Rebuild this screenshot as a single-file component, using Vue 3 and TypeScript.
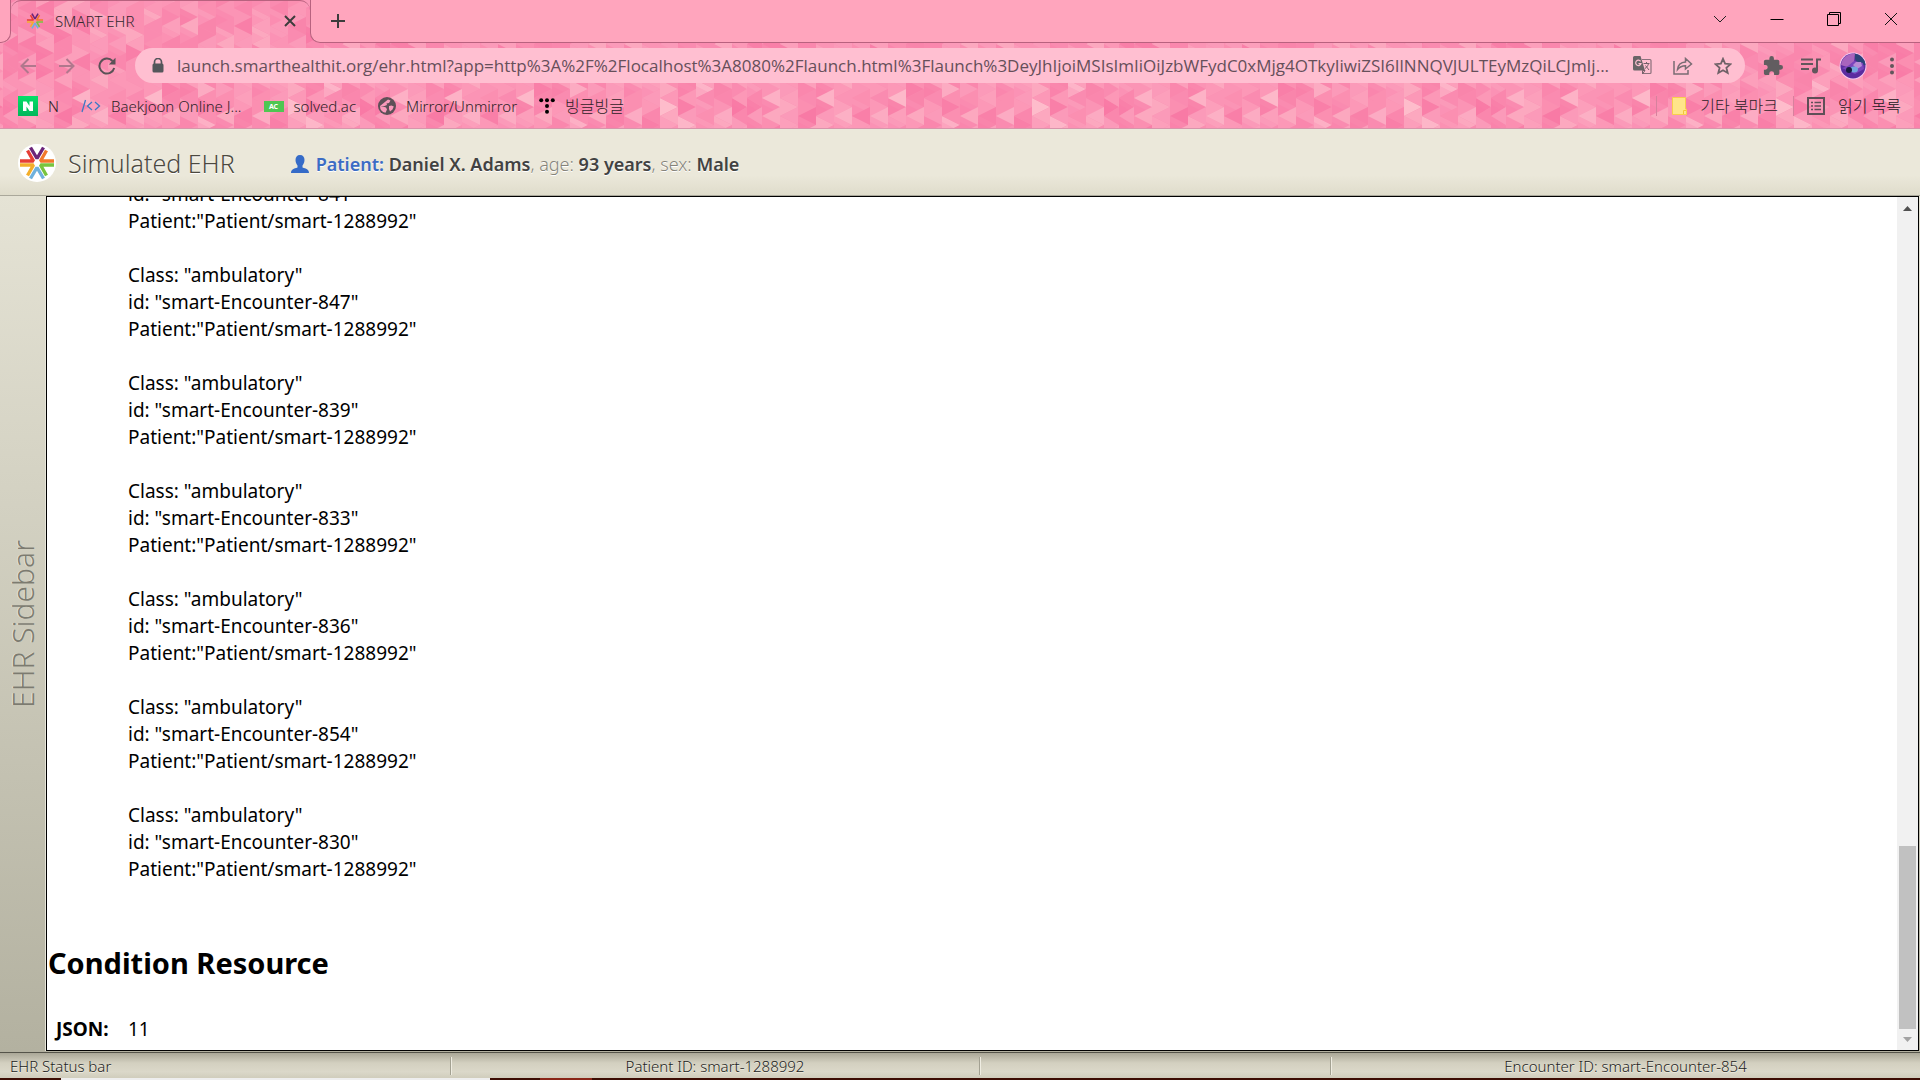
<script setup lang="ts">
interface Shard { points: string; fill: string; opacity: number }

const columns = [18, 18, 18, 18, 15, 15, 18, 18, 18, 18, 18, 18, 18, 18, 18, 18, 18, 18, 18, 18, 18]
const accents: Record<string, string> = {
  '0-r-5': '#febccb', '1-r-6': '#fdb6c8', '2-r-4': '#fdb4c8', '3-l-6': '#fcaac2',
  '6-l-5': '#fdb0c5', '9-l-5': '#fdb2c6', '10-l-6': '#fcb0c5', '13-l-5': '#fdb8c9',
  '12-l-6': '#fcabc2', '16-r-4': '#fcabc2', '16-r-6': '#fdb0c5', '4-r-5': '#f97ba6',
  '5-r-5': '#f980a9', '8-l-6': '#f87aa5', '18-l-6': '#f981a9', '19-l-6': '#fcabc3',
}
const tones = ['#fb8fb1', '#fa87ad', '#fc98b7', '#f985ab', '#fc9fbb', '#fb94b5', '#fa8bb0', '#fca8bf', '#f97fa8', '#fb9ab9']

function makeShards(): Shard[] {
  let seed = 41
  const next = () => {
    seed = (seed * 1103515245 + 12345) % 2147483648
    return seed / 2147483648
  }
  const shards: Shard[] = []
  let x = 0
  columns.forEach((w, c) => {
    for (let r = -1; r < 8; r++) {
      const top = 8 + r * 18
      const right = accents[`${c}-r-${r}`] ?? tones[Math.floor(next() * tones.length)]
      const left = accents[`${c}-l-${r}`] ?? tones[Math.floor(next() * tones.length)]
      shards.push({ points: `${x},${top} ${x + w},${top + 9} ${x},${top + 18}`, fill: right, opacity: 1 })
      shards.push({ points: `${x + w},${top - 9} ${x + w},${top + 9} ${x},${top}`, fill: left, opacity: 1 })
      if (next() > 0.5) {
        shards.push({ points: `${x},${top + 6} ${x + w},${top + 15} ${x},${top + 24}`, fill: '#f9719f', opacity: 0.18 })
      }
    }
    x += w
  })
  return shards
}
const shards = makeShards()

const url = 'launch.smarthealthit.org/ehr.html?app=http%3A%2F%2Flocalhost%3A8080%2Flaunch.html%3Flaunch%3DeyJhIjoiMSIsImIiOiJzbWFydC0xMjg4OTkyIiwiZSI6IlNNQVJULTEyMzQiLCJmIj...'

const patientId = 'smart-1288992'
const encounters = [841, 847, 839, 833, 836, 854, 830]
</script>

<template>
  <div class="window">
    <header class="chrome">
      <svg class="theme" aria-hidden="true">
        <defs>
          <pattern id="shards" x="-84" y="0" width="372" height="144" patternUnits="userSpaceOnUse">
            <rect width="372" height="144" fill="#fb8fb1" />
            <polygon v-for="(s, i) in shards" :key="i" :points="s.points" :fill="s.fill" :fill-opacity="s.opacity" />
          </pattern>
        </defs>
        <rect width="100%" height="100%" fill="url(#shards)" />
      </svg>

      <div class="tabstrip">
        <div class="strip-start"></div>
        <div class="tab">
          <svg class="favicon" viewBox="0 0 38 38"><use href="#smart-star" /></svg>
          <span class="tab-title">SMART EHR</span>
          <button class="plain" aria-label="Close tab">
            <svg width="12" height="12" viewBox="0 0 12 12" stroke="#3c3c3c" stroke-width="2"><path d="M1 1 11 11M11 1 1 11" /></svg>
          </button>
        </div>
        <div class="strip-rest">
          <button class="plain" aria-label="New tab">
            <svg width="16" height="16" viewBox="0 0 16 16" stroke="#3c3c3c" stroke-width="2"><path d="M8 1V15M1 8H15" /></svg>
          </button>
          <div class="controls">
            <button class="plain" aria-label="Search tabs"><svg width="14" height="14" viewBox="0 0 14 14" fill="none" stroke="#222"><path d="M1 4 7 10 13 4" /></svg></button>
            <button class="plain" aria-label="Minimize"><svg width="14" height="14" viewBox="0 0 14 14" fill="none" stroke="#000"><path d="M.5 7.500H13.500" /></svg></button>
            <button class="plain" aria-label="Restore"><svg width="14" height="14" viewBox="0 0 14 14" fill="none" stroke="#000"><path d="M.5 2.500H11.500V13.500H.5ZM2.500 2.500V.5H13.500V11.500H11.500" /></svg></button>
            <button class="plain" aria-label="Close"><svg width="14" height="14" viewBox="0 0 14 14" fill="none" stroke="#111"><path d="M1 1 13 13M13 1 1 13" /></svg></button>
          </div>
        </div>
      </div>

      <div class="toolbar">
        <div class="nav">
          <button class="plain" aria-label="Back"><svg width="16" height="16" viewBox="0 0 16 16" fill="none" stroke="#b1788d" stroke-width="2"><path d="M16 8H2M8.500 1 1.500 8 8.500 15" /></svg></button>
          <button class="plain" aria-label="Forward"><svg width="16" height="16" viewBox="0 0 16 16" fill="none" stroke="#b1788d" stroke-width="2"><path d="M0 8H14M7.500 1 14.500 8 7.500 15" /></svg></button>
          <button class="plain" aria-label="Reload"><svg width="18" height="18" viewBox="0 0 18 18" fill="none" stroke="#5b5257" stroke-width="2"><path d="M14.500 4A7.500 7.500 0 1 0 16.200 11" /><path d="M17.500 .8V7.500H10.800Z" fill="#5b5257" stroke="none" /></svg></button>
        </div>
        <div class="omnibox">
          <svg width="12" height="15" viewBox="0 0 12 15"><path d="M2.500 6V4a3.500 3.500 0 0 1 7 0v2" fill="none" stroke="#54565b" stroke-width="1.700" /><rect x=".5" y="5.500" width="11" height="9" rx="1.500" fill="#54565b" /></svg>
          <input class="url" type="text" aria-label="Address" :value="url" readonly />
          <div class="omni-actions">
            <button class="plain" aria-label="Translate">
              <svg width="19" height="19" viewBox="0 0 19 19"><path d="M9 3.500H17a1 1 0 0 1 1 1V16.500a1 1 0 0 1-1 1H9.500" fill="none" stroke="#8b707b" stroke-width="1.200" /><path d="M1.500 0H7.500L12 14.500H1.500A1.500 1.500 0 0 1 0 13V1.500A1.500 1.500 0 0 1 1.500 0Z" fill="#6a6467" /><path d="M7.600 5.300A2.700 2.700 0 1 0 8 7.600H5.500" fill="none" stroke="#ffbfd1" stroke-width="1.200" /><path d="M10.500 7.500H16.500M13.500 6V7.500M15.500 7.500C15 10 13.500 11.500 12 12.500M12.500 9.500 16 14M9.500 14.500 12 14.500 9.500 18Z" fill="none" stroke="#74616a" /></svg>
            </button>
            <button class="plain" aria-label="Share">
              <svg width="20" height="18" viewBox="0 0 20 18" fill="none" stroke="#7a6c73" stroke-width="1.500"><path d="M1 4V17H15V13" /><path d="M4.500 12.500C5 8 8 5.200 12.500 5V1.500L18.500 7 12.500 12V8.700C9 8.700 6.500 10 4.500 12.500Z" /></svg>
            </button>
            <button class="plain" aria-label="Bookmark">
              <svg width="18" height="18" viewBox="0 0 18 18" fill="none" stroke="#6f6167" stroke-width="1.800"><path d="M9 1.800 11.100 6.700 16.500 7.200 12.400 10.700 13.700 16 9 13.200 4.300 16 5.600 10.700 1.500 7.200 6.900 6.700Z" /></svg>
            </button>
          </div>
        </div>
        <div class="tools">
          <button class="plain" aria-label="Extensions">
            <svg width="20" height="20" viewBox="1 1 22 22" fill="#625d60"><path d="M20.500 11H19V7c0-1.100-.9-2-2-2h-4V3.500a2.500 2.500 0 0 0-5 0V5H4c-1.100 0-2 .9-2 2v3.800h1.500a2.700 2.700 0 0 1 0 5.400H2V20c0 1.100.9 2 2 2h3.800v-1.500a2.700 2.700 0 0 1 5.400 0V22H17c1.100 0 2-.9 2-2v-4h1.500a2.500 2.500 0 0 0 0-5z" /></svg>
          </button>
          <button class="plain" aria-label="Media">
            <svg width="20" height="16" viewBox="0 0 20 16"><path d="M0 1.500H12M0 6H12M0 11H8" stroke="#62565c" stroke-width="2" /><path d="M16 12V1.500H20" fill="none" stroke="#62565c" stroke-width="2" /><circle cx="14" cy="12.500" r="3" fill="#62565c" /></svg>
          </button>
          <button class="plain" aria-label="Profile">
            <svg width="28" height="28" viewBox="0 0 28 28"><circle cx="14" cy="14" r="13.500" fill="#f5c9f0" /><circle cx="14" cy="14" r="12.500" fill="#5b2ca0" /><path d="M15 1.500A12.500 12.500 0 0 1 26.500 13L20 13 16 7Z" fill="#2c4478" /><path d="M2 13C3 5 10 1 16 1.600L15 10 8 15Z" fill="#a864bd" /><path d="M3 16 9 14 15 9 24 11 25 17 16 22Z" fill="#7b45bd" /><path d="M14 13 17 10 22 10 23 14 18 17Z" fill="#b98ad6" /><ellipse cx="15" cy="17.500" rx="4" ry="3" fill="#73a6df" /><circle cx="10" cy="18" r="3" fill="#171b3f" /></svg>
          </button>
          <button class="plain" aria-label="Menu">
            <svg width="4" height="18" viewBox="0 0 4 18" fill="#62565c"><circle cx="2" cy="2.500" r="2" /><circle cx="2" cy="9" r="2" /><circle cx="2" cy="15.500" r="2" /></svg>
          </button>
        </div>
      </div>

      <nav class="bookmarks">
        <a href="#" class="bm">
          <svg width="20" height="20" viewBox="0 0 20 20"><defs><linearGradient id="green" x2="0" y2="1"><stop stop-color="#05df68" /><stop offset="1" stop-color="#02b65b" /></linearGradient></defs><rect width="20" height="20" fill="url(#green)" /><path d="M5 5.500H8.500L11.500 10V5.500H15V15H11.500L8.500 10.500V15H5Z" fill="#fff" /></svg>
          <span>N</span>
        </a>
        <a href="#" class="bm">
          <svg width="20" height="14" viewBox="0 0 20 14" fill="none" stroke="#3d78c4" stroke-width="1.300"><path d="M4.500 1 1 13" /><path d="M11 3 6.500 7 11 11M14 3 18.500 7 14 11" /></svg>
          <span>Baekjoon Online J...</span>
        </a>
        <a href="#" class="bm">
          <span class="ac">AC</span>
          <span>solved.ac</span>
        </a>
        <a href="#" class="bm">
          <svg width="18" height="18" viewBox="0 0 18 18"><circle cx="9" cy="9" r="9" fill="#5d5057" /><path d="M10 2.500 12.500 3.500 11 6 8.500 6.500 9 8 6.500 9H2.200L5 9.500 8 10.500 9 12.500 7.500 15.800A7 7 0 0 1 2 9ZM11 9 13.500 8.500 15.800 9.500 14.500 12.500 12 14.500 11 12Z" fill="#f99abb" /></svg>
          <span>Mirror/Unmirror</span>
        </a>
        <a href="#" class="bm">
          <svg width="16" height="16" viewBox="0 0 16 16"><circle cx="2.200" cy="2.200" r="2" /><circle cx="8" cy="2.200" r="2" /><circle cx="13.800" cy="2.200" r="2" /><circle cx="8" cy="8" r="2" /><circle cx="8" cy="13.800" r="2" /></svg>
          <span class="ko">빙글빙글</span>
        </a>
        <div class="bm-right">
          <a href="#" class="bm split">
            <svg width="15" height="18" viewBox="0 0 15 18"><path d="M.5 .5H13.500V12H14.500V17.500H.5Z" fill="#ffe58a" stroke="#f8cf4c" /><path d="M11.500 17V13.500H14" fill="none" stroke="#f5c53c" /></svg>
            <span class="ko">기타 북마크</span>
          </a>
          <a href="#" class="bm split reading">
            <svg width="18" height="18" viewBox="0 0 18 18"><rect x="1" y="1" width="16" height="16" fill="none" stroke="#5f4f57" stroke-width="2" /><path d="M4 5.500H6M7.500 5.500H14M4 9H6M7.500 9H14M4 12.500H6M7.500 12.500H14" stroke="#5f4f57" stroke-width="1.500" /></svg>
            <span class="ko">읽기 목록</span>
          </a>
        </div>
      </nav>
    </header>

    <div class="ehr-head">
      <svg class="logo" viewBox="0 0 38 38">
        <circle cx="19" cy="19" r="19" fill="#fff" />
        <g id="smart-star" fill="none" stroke-width="3.400" stroke-linejoin="bevel">
          <path d="M12.500 3.500 19 14.500 25.500 3.500" stroke="#6c2479" />
          <path d="M28.500 6.500 22.500 17H36" stroke="#f2792b" />
          <path d="M9.500 6.500 15.500 17H2" stroke="#e63e35" />
          <path d="M2 21H15.500L9.500 31.500" stroke="#f3ae2b" />
          <path d="M36 21H22.500L28.500 31.500" stroke="#78c43d" />
          <path d="M12.500 34.500 19 23.500 25.500 34.500" stroke="#6fb1dc" />
        </g>
      </svg>
      <h1>Simulated EHR</h1>
      <div class="patient">
        <svg width="18" height="18" viewBox="0 0 18 18" fill="#356bc8"><path d="M9 0C12 0 13.500 2 13.500 5 13.500 8 12 9.500 11.500 10.500V12.500C15 13.500 18 14.500 18 18H0C0 14.500 3 13.500 6.500 12.500V10.500C6 9.500 4.500 8 4.500 5 4.500 2 6 0 9 0Z" /></svg>
        <p><b class="blue">Patient:</b> <b>Daniel X. Adams</b>, age: <b>93 years</b>, sex: <b>Male</b></p>
      </div>
    </div>

    <div class="body">
      <aside class="sidebar"><span>EHR Sidebar</span></aside>
      <main class="frame">
        <div class="content">
          <div class="encounters">
            <p v-for="(n, i) in encounters" :key="n">
              <template v-if="i > 0">Class: "ambulatory"<br /></template>id: "smart-Encounter-{{ n }}"<br />Patient:"Patient/{{ patientId }}"
            </p>
          </div>
          <h2>Condition Resource</h2>
          <table><tbody><tr><th scope="row">JSON:</th><td>11</td></tr></tbody></table>
        </div>
        <div class="scrollbar">
          <svg width="21" height="20" viewBox="0 0 21 20"><path d="M6 14 10.500 9 15 14Z" fill="#505050" /></svg>
          <div class="track"><div class="thumb"></div></div>
          <svg width="21" height="20" viewBox="0 0 21 20"><path d="M6 7 10.500 12 15 7Z" fill="#a3a3a3" /></svg>
        </div>
      </main>
    </div>

    <footer class="status">
      <div class="cell first">EHR Status bar</div>
      <div class="cell">Patient ID: {{ patientId }}</div>
      <div class="cell"></div>
      <div class="cell last">Encounter ID: smart-Encounter-854</div>
    </footer>
    <div class="taskbar"><i class="dark a"></i><i class="light"></i><i class="dark b"></i><i class="red"></i><i class="dark c"></i></div>
  </div>
</template>

<style>
body { overflow: hidden; }
</style>

<style scoped>
* { box-sizing: border-box; }
.window {
  height: 100vh;
  display: flex;
  flex-direction: column;
  font-family: "Noto Sans", "Noto Sans CJK KR", sans-serif;
  color: #000;
}
.plain {
  border: 0;
  padding: 0;
  background: none;
  display: flex;
  align-items: center;
  justify-content: center;
}
svg { display: block; flex: none; }
.chrome { position: relative; flex: none; border-bottom: 1px solid #d795ab; }
.theme { position: absolute; inset: 0; width: 100%; height: 100%; z-index: -1; }
.tabstrip { display: flex; height: 43px; }
.strip-start {
  width: 11px;
  background: #ffa5bd;
  border: solid #b8627f;
  border-width: 0 1px 1px 0;
  border-bottom-right-radius: 10px;
}
.tab {
  width: 299px;
  border-top: 1px solid #b8627f;
  border-radius: 10px 10px 0 0;
  display: flex;
  align-items: center;
  padding: 0 14px 2px 15px;
}
.favicon { width: 18px; height: 18px; }
.tab-title { flex: 1; margin-left: 11px; font-size: 15px; font-weight: 300; color: #33292e; }
.strip-rest {
  flex: 1;
  display: flex;
  align-items: center;
  justify-content: space-between;
  padding: 0 22px 1px 19px;
  background: #ffa5bd;
  border: solid #b8627f;
  border-width: 0 0 1px 1px;
  border-bottom-left-radius: 10px;
}
.controls { display: flex; gap: 43px; padding-bottom: 4px; }
.toolbar { display: flex; align-items: center; height: 45px; padding: 0 26px 0 20px; }
.nav { display: flex; gap: 23px; width: 115px; }
.omnibox {
  flex: 1;
  min-width: 0;
  height: 35px;
  border-radius: 18px;
  background: #ffbfd1;
  display: flex;
  align-items: center;
  padding: 0 13px 0 17px;
}
.url {
  flex: 1;
  min-width: 0;
  margin-left: 13px;
  border: 0;
  padding: 0;
  background: none;
  outline: none;
  font: 17px "Open Sans", "Noto Sans", sans-serif;
  color: #664f5a;
  text-overflow: ellipsis;
}
.omni-actions { display: flex; align-items: center; gap: 21px; margin-left: 14px; }
.tools { display: flex; align-items: center; gap: 18px; margin-left: 18px; }
.tools .plain:last-child { margin-left: 5px; }
.bookmarks { display: flex; align-items: center; height: 40px; padding: 0 19px 4px 18px; gap: 22px; }
.bm { display: flex; align-items: center; gap: 10px; font-size: 15px; font-weight: 300; line-height: 20px; color: #2e2227; text-decoration: none; }
.ko { font-size: 16px; }
.ac { width: 20px; height: 11px; background: #4fc652; color: #fff; font-size: 7px; line-height: 11px; font-weight: 700; text-align: center; }
.bm-right { margin-left: auto; display: flex; gap: 15px; }
.split { border-left: 1px solid #d7819d; padding-left: 15px; gap: 13px; }
.reading { padding-left: 13px; color: #21161b; }
.ehr-head {
  flex: none;
  height: 67px;
  display: flex;
  align-items: center;
  padding: 2px 18px 0;
  background: linear-gradient(#ebe8da 70%, #dfdccb);
  border-bottom: 1px solid #aaa89b;
  text-shadow: 0 1px 0 #fff;
}
.logo { width: 38px; height: 38px; }
h1 { margin: 0 0 0 12px; font-size: 25px; font-weight: 300; color: #4c493f; }
.patient { display: flex; align-items: center; gap: 7px; margin: 2px 0 0 56px; }
.patient p { margin: 0; font-size: 18px; line-height: 24px; font-weight: 300; color: #85837a; }
.patient b { color: #424242; font-weight: 600; }
.patient .blue { color: #3c6cc4; }
.body { flex: 1; min-height: 0; display: flex; background: linear-gradient(#e5e3d5, #b3b1a0); padding: 0 1px 1px 0; }
.sidebar { width: 46px; display: flex; align-items: center; justify-content: center; border-right: 1px solid #e7e5d9; }
.sidebar span {
  writing-mode: vertical-rl;
  transform: rotate(180deg);
  font-size: 30px;
  font-weight: 300;
  line-height: 32px;
  color: #7c7b70;
  text-shadow: 0 -1px 0 #e4e2d6;
}
.frame { flex: 1; min-width: 0; display: flex; border: 1px solid #000; background: #fff; }
.content { flex: 1; display: flex; flex-direction: column; justify-content: flex-end; overflow: hidden; padding: 0 0 7px 1px; font-size: 19px; line-height: 27px; }
.encounters { padding-left: 80px; }
.encounters p { margin: 0 0 27px; }
h2 { margin: 33px 0 33px; font-size: 29px; line-height: 40px; font-weight: 700; }
table { border-collapse: collapse; width: 120px; }
th { width: 80px; padding: 0 0 0 8px; text-align: left; font-weight: 700; }
td { padding: 0; }
.scrollbar { width: 21px; background: #f1f1f1; display: flex; flex-direction: column; }
.track { flex: 1; display: flex; flex-direction: column; justify-content: flex-end; padding: 0 2px 1px; }
.thumb { height: 22.5%; background: #c1c1c1; }
.status {
  flex: none;
  height: 26px;
  display: grid;
  grid-template-columns: 451fr 529fr 351fr 589fr;
  align-items: center;
  border-top: 1px solid #55544a;
  background: linear-gradient(#aaa797, #d3d0c0 40%, #dbd8c9 75%, #d0cdbc);
  font-size: 15px;
  font-weight: 300;
  line-height: 18px;
  color: #222;
  text-shadow: 0 1px 0 #eeecdf;
}
.cell { height: 18px; text-align: center; border-right: 1px solid #a3a192; box-shadow: 1px 0 0 #efede2; }
.first { text-align: left; padding-left: 10px; }
.last { border: 0; box-shadow: none; }
.taskbar { flex: none; height: 2px; display: flex; }
.dark { background: #3d0d04; }
.a { flex: 61; }
.light { flex: 429; background: #eee; }
.b { flex: 50; }
.red { flex: 52; background: #8a2618; }
.c { flex: 1328; }
</style>
